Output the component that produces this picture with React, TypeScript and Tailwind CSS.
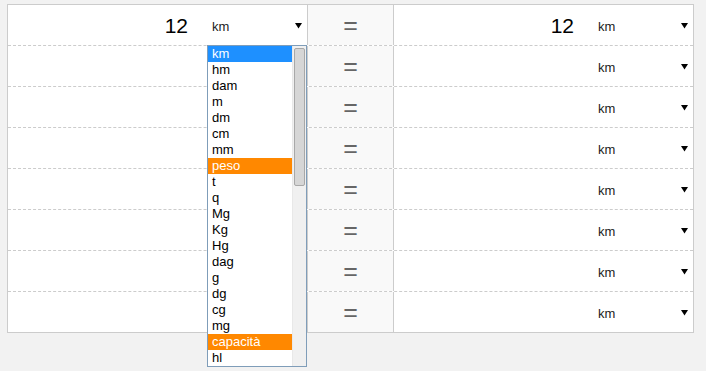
import React from "react";

const items = [
  "km", "hm", "dam", "m", "dm", "cm", "mm", "peso", "t", "q", "Mg", "Kg", "Hg", "dag", "g", "dg", "cg", "mg", "capacità", "hl",
];

function Arrow() {
  return (
    <svg width="7" height="7" viewBox="0 0 7 7" className="block">
      <polygon points="0,1 7,1 3.5,6.5" fill="#000" />
    </svg>
  );
}

function Cell({ value }: { value: string }) {
  return (
    <div className="flex h-full items-center">
      <div className="w-[180px] text-right text-[21px] leading-none text-black pt-[1px]">{value}</div>
      <div className="ml-[24px] flex w-[90px] items-center justify-between">
        <span className="text-[13px] leading-none text-[#222] pt-[3px]">km</span>
        <Arrow />
      </div>
    </div>
  );
}

export default function App() {
  const rows = [0, 1, 2, 3, 4, 5, 6, 7];
  return (
    <div className="relative h-[371px] w-full overflow-hidden bg-[#f2f2f2] pt-[4px] pl-[7px]" style={{ fontFamily: '"Liberation Sans", Arial, sans-serif' }}>
      <div className="w-[687px] border border-[#cccccc] bg-white">
        {rows.map((r) => (
          <div
            key={r}
            className={`flex ${r < 7 ? "h-[41px] border-b border-dashed border-[#cccccc]" : "h-[40px]"}`}
          >
            <div className="w-[300px] border-r border-[#cccccc]">
              <Cell value={r === 0 ? "12" : ""} />
            </div>
            <div className="flex w-[86px] items-center justify-center border-r border-[#cccccc] bg-[#f9f9f9]">
              <span className="text-[25px] leading-none text-[#666]">=</span>
            </div>
            <div className="flex-1">
              <Cell value={r === 0 ? "12" : ""} />
            </div>
          </div>
        ))}
      </div>

      <div className="absolute left-[207px] top-[45px] flex h-[322px] w-[100px] border border-[#7f9db9] bg-white">
        <div className="w-[84px]">
          {items.map((it, i) => {
            const bg = i === 0 ? "bg-[#1e90ff] text-white" : it === "peso" || it === "capacità" ? "bg-[#ff8800] text-white" : "text-black";
            return (
              <div key={it} className={`h-[16px] pl-[4px] text-[13px] leading-[16px] ${bg}`}>
                {it}
              </div>
            );
          })}
        </div>
        <div className="relative flex-1 bg-[#f0f0f0] border-l border-[#e8e8e8]">
          <div className="absolute left-[1px] top-[2px] h-[138px] w-[11px] rounded-[2px] border border-[#a8a8a8] bg-[#d6d6d6]" />
        </div>
      </div>
    </div>
  );
}
